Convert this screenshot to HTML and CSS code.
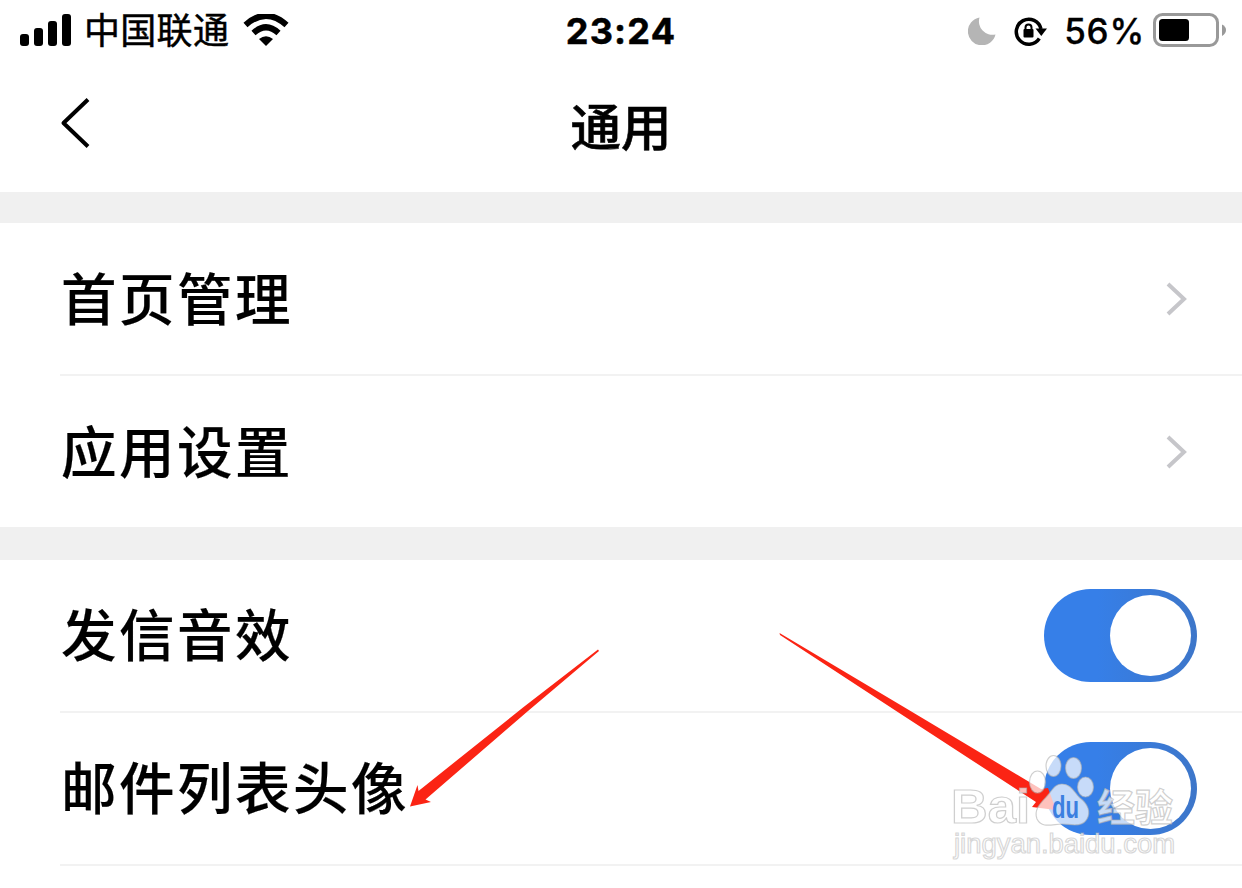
FILE: index.html
```html
<!DOCTYPE html>
<html lang="zh-CN">
<head>
  <meta charset="UTF-8">
  <title>通用</title>
  <link rel="stylesheet" href="styles.css">
</head>
<body>
  <div class="status-bar">
    <div class="status-left">
      <svg class="signal" width="52" height="34" viewBox="0 0 52 34">
        <rect x="0" y="20" width="9" height="12" rx="3"/>
        <rect x="14" y="14" width="9" height="18" rx="3"/>
        <rect x="28" y="7" width="9" height="25" rx="3"/>
        <rect x="42" y="0" width="9" height="32" rx="3"/>
      </svg>
      <span class="carrier">中国联通</span>
      <svg class="wifi" width="46" height="34" viewBox="0 0 46 34">
        <path d="M2.500 11Q23-7.500 43.500 11" fill="none" stroke="#000" stroke-width="6"/>
        <path d="M10.500 19Q23 7.500 35.500 19" fill="none" stroke="#000" stroke-width="6"/>
        <path d="M16 25Q23 19.500 30 25L23 32Z"/>
      </svg>
    </div>
    <div class="time">23:24</div>
    <div class="status-right">
      <svg class="moon" width="28" height="28" viewBox="0 0 28 28">
        <path d="M11.500 0.500A14 14 0 1 0 27.500 17.500A13.500 13.500 0 0 1 11.500 0.500Z" fill="#b5b5b5"/>
      </svg>
      <svg class="lock" width="34" height="30" viewBox="0 0 34 30">
        <path d="M25.300 22.500A12.500 12.500 0 1 1 27 13" fill="none" stroke="#000" stroke-width="3.500"/>
        <path d="M21.500 12.500H33L27.300 20Z"/>
        <rect x="9.500" y="13" width="10" height="8.500" rx="1"/>
        <path d="M11.500 14V11.500a3 3 0 0 1 6 0V14" fill="none" stroke="#000" stroke-width="2"/>
      </svg>
      <span class="percent">56%</span>
      <svg class="battery" width="74" height="34" viewBox="0 0 74 34">
        <rect x="1.500" y="1.500" width="63" height="31" rx="8" fill="none" stroke="#999" stroke-width="3"/>
        <rect x="6" y="6" width="30" height="22" rx="3.500"/>
        <path d="M69 11.500Q73 13.500 73 17T69 23Z" fill="#999"/>
      </svg>
    </div>
  </div>

  <div class="nav-bar">
    <svg class="back" width="32" height="50" viewBox="0 0 32 50">
      <path d="M28 1.500L3.500 25L28 48.500" fill="none" stroke="#000" stroke-width="4" stroke-linejoin="round"/>
    </svg>
    <div class="title">通用</div>
  </div>

  <div class="group entries">
    <div class="row">
      <span class="label">首页管理</span>
      <svg class="chevron" width="22" height="34" viewBox="0 0 22 34">
        <path d="M2 2L18 17L2 32" fill="none" stroke="#c6c6ca" stroke-width="4"/>
      </svg>
    </div>
    <div class="row">
      <span class="label">应用设置</span>
      <svg class="chevron" width="22" height="34" viewBox="0 0 22 34">
        <path d="M2 2L18 17L2 32" fill="none" stroke="#c6c6ca" stroke-width="4"/>
      </svg>
    </div>
  </div>

  <div class="group switches">
    <div class="row">
      <span class="label">发信音效</span>
      <div class="switch"><div class="knob"></div></div>
    </div>
    <div class="row">
      <span class="label">邮件列表头像</span>
      <div class="switch"><div class="knob"></div></div>
    </div>
  </div>

  <!-- arrows and watermark over the list -->
  <svg class="overlay" width="1242" height="888" viewBox="0 0 1242 888">
    <g fill="#fb2414">
      <path d="M598 649.500L523 707.500L418.500 791L417.500 785L410 806.500L431 802L425.500 799.500L528 711L599 651Z"/>
      <path d="M779.500 633L780 635L900 713.500L1036 802L1032 807L1056 810L1048 788L1041 789L903 706.500Z"/>
    </g>
    <g class="mark">
      <text class="mark-baidu" x="951" y="823" textLength="79" lengthAdjust="spacingAndGlyphs">Bai</text>
      <ellipse cx="1037.500" cy="782" rx="8" ry="11"/>
      <ellipse cx="1053.500" cy="766" rx="7.500" ry="10.500"/>
      <ellipse cx="1073.500" cy="768" rx="8" ry="10.500"/>
      <ellipse cx="1085.500" cy="787" rx="8" ry="10"/>
      <path d="M1062 784C1071 784 1074 792 1080 798C1088 804 1091 812 1087 819C1082 828 1070 824 1062 824C1053 824 1042 829 1037 819C1033 809 1042 802 1048 795C1053 789 1055 784 1062 784Z"/>
      <text class="mark-cn" x="1097" y="821" textLength="76" lengthAdjust="spacingAndGlyphs">经验</text>
      <text class="mark-url" x="954" y="853" textLength="221" lengthAdjust="spacingAndGlyphs">jingyan.baidu.com</text>
    </g>
    <text class="mark-du" x="1052" y="818" textLength="27" lengthAdjust="spacingAndGlyphs">du</text>
  </svg>
</body>
</html>
```
FILE: styles.css
```css
body {
  margin: 0;
  height: 888px;
  overflow: hidden;
  background: #fff;
  color: #000;
  font-family: Inter, "Noto Sans CJK SC", sans-serif;
}
.status-bar {
  display: grid;
  grid-template-columns: 1fr auto 1fr;
  align-items: center;
  height: 62px;
  padding: 0 15px 0 20px;
}
.status-left,
.status-right {
  display: flex;
  align-items: center;
}
.status-right {
  justify-content: flex-end;
}
.signal {
  margin-right: 12px;
}
.carrier {
  font-size: 36px;
  font-weight: 400;
  letter-spacing: 0.3px;
  line-height: 62px;
  white-space: nowrap;
  -webkit-text-stroke: 0.5px #000;
}
.wifi {
  margin: -1px 0 0 14px;
}
.time {
  margin-left: -5px;
  font-size: 36px;
  font-weight: 700;
  letter-spacing: 1.2px;
  -webkit-text-stroke: 0.5px #000;
}
.lock {
  margin: 0 16px 0 18px;
}
.percent {
  font-size: 35px;
  font-weight: 500;
  letter-spacing: 0.8px;
  -webkit-text-stroke: 0.3px #000;
}
.battery {
  margin: -2px 0 0 8px;
}
.nav-bar {
  display: grid;
  grid-template-columns: 1fr auto 1fr;
  align-items: center;
  height: 130px;
  padding: 0 60px;
}
.back {
  margin-bottom: 9px;
}
.title {
  font-size: 50.5px;
  font-weight: 500;
  line-height: 130px;
  padding-top: 1px;
  -webkit-text-stroke: 0.6px #000;
}
.group {
  border-top: 31px solid #f0f0f0;
}
.switches {
  border-top-width: 33px;
}
.row {
  display: flex;
  align-items: center;
  justify-content: space-between;
  height: 151px;
  margin-left: 60px;
  padding-right: 45px;
  border-bottom: 2px solid #f2f2f2;
}
.entries .row:last-child {
  border-bottom: none;
}
.label {
  padding: 0 0 7px 1px;
  font-size: 55.5px;
  font-weight: 500;
  letter-spacing: 2.5px;
  white-space: nowrap;
  -webkit-text-stroke: 0.2px #000;
}
.entries .label {
  padding-bottom: 6px;
}
.chevron {
  margin-right: 9px;
}
.switch {
  display: flex;
  align-items: center;
  justify-content: flex-end;
  box-sizing: border-box;
  width: 153px;
  height: 93px;
  padding-right: 6px;
  border-radius: 47px;
  background: linear-gradient(90deg, #367fe8 35%, #3d76c9);
}
.knob {
  width: 81px;
  height: 81px;
  border-radius: 50%;
  background: #fff;
}
.overlay {
  position: absolute;
  top: 0;
  left: 0;
}
.mark {
  fill: rgba(255, 255, 255, 0.72);
  stroke: rgba(175, 175, 175, 0.6);
  stroke-width: 1.2px;
}
.mark-baidu {
  font: 700 48px "Liberation Sans", sans-serif;
}
.mark-cn {
  font: 700 38px "Noto Sans CJK SC", sans-serif;
}
.mark-url {
  font: 400 27px "Liberation Sans", sans-serif;
  stroke: rgba(175, 175, 175, 0.5);
}
.mark-du {
  fill: #3b7fe0;
  font: 700 32px "Liberation Sans", sans-serif;
}
```
